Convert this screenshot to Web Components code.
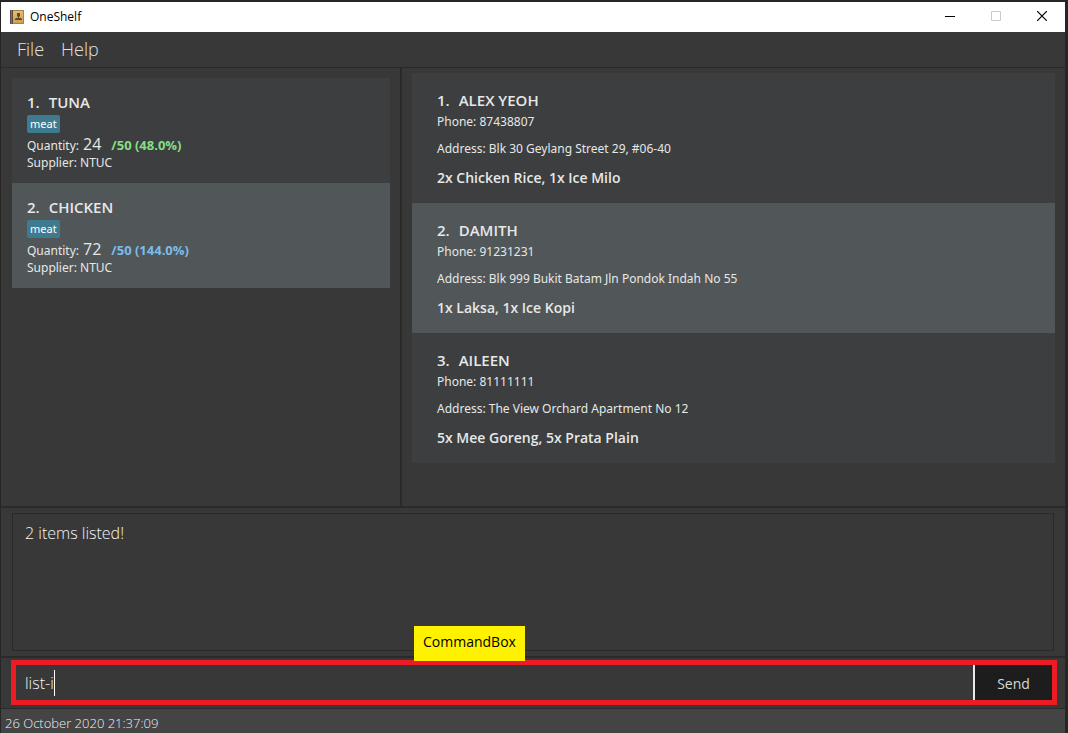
<!DOCTYPE html>
<html lang="en">
<head>
<meta charset="utf-8">
<title>OneShelf</title>
<style>
  body { margin: 0; background: #262626; font-family: "Open Sans", "Noto Sans", sans-serif; }
</style>
</head>
<body>
<shelf-app></shelf-app>

<template id="shelf-app">
  <style>
    :host { display: flex; flex-direction: column; box-sizing: border-box; min-height: 100vh; padding: 2px 3px 0 1px; }
    main { flex: 1; display: grid; grid-template-columns: 399fr 2px 663fr; background: #383838; border-top: 1px solid #2a2a2a; }
    .rule { background: #2a2a2a; }
    .items { padding: 10px 10px 10px 11px; }
    .orders { padding: 5px 10px; }
  </style>
  <title-bar>OneShelf</title-bar>
  <menu-bar></menu-bar>
  <main>
    <section class="items" role="list" aria-label="Items">
      <item-card index="1." name="TUNA" tag="meat" quantity="24" supplier="NTUC">/50 (48.0%)</item-card>
      <item-card index="2." name="CHICKEN" tag="meat" quantity="72" supplier="NTUC" alt over>/50 (144.0%)</item-card>
    </section>
    <div class="rule"></div>
    <section class="orders" role="list" aria-label="Orders">
      <order-card index="1." name="ALEX YEOH" phone="87438807" address="Blk 30 Geylang Street 29, #06-40">2x Chicken Rice, 1x Ice Milo</order-card>
      <order-card index="2." name="DAMITH" phone="91231231" address="Blk 999 Bukit Batam Jln Pondok Indah No 55" alt>1x Laksa, 1x Ice Kopi</order-card>
      <order-card index="3." name="AILEEN" phone="81111111" address="The View Orchard Apartment No 12">5x Mee Goreng, 5x Prata Plain</order-card>
    </section>
  </main>
  <result-display>2 items listed!</result-display>
  <command-box callout="CommandBox" value="list-i"></command-box>
  <status-bar>26 October 2020 21:37:09</status-bar>
</template>

<template id="title-bar">
  <style>
    :host { display: flex; align-items: center; height: 30px; background: #fff; color: #000; font-size: 12px; line-height: 16px; }
    .logo { margin: 0 6px 0 9px; }
    span { flex: 1; }
    button { display: grid; place-items: center; width: 46px; height: 30px; padding: 0 0 2px; border: 0; background: none; }
  </style>
  <svg class="logo" width="14" height="14" viewBox="0 0 14 14" aria-hidden="true">
    <defs><linearGradient id="g" x1="0" y1="0" x2="0" y2="1"><stop offset="0" stop-color="#e9bf70"/><stop offset="1" stop-color="#cf9c4c"/></linearGradient></defs>
    <path fill="url(#g)" d="M2 0h12v14H2z"/>
    <path fill="#5b4a41" d="M0 0h3v14H0z"/>
    <path fill="#85705a" d="M1 0h1v14H1z"/>
    <path fill="#a8824c" d="M3 13h11v1H3zM13 1h1v13h-1zM3 0h11v1H3z"/>
    <path fill="#5d4a2c" d="M7 3h3v3L9 7v1h2l1 1v1H5V9l1-1h2V7L7 6z"/>
  </svg>
  <span><slot></slot></span>
  <button aria-label="Minimize"><svg width="10" height="10"><path fill="#000" d="M0 5h10v1H0z"/></svg></button>
  <button aria-label="Maximize" disabled><svg width="10" height="10"><path fill="none" stroke="#ccc" d="M.5.5h9v9h-9z"/></svg></button>
  <button aria-label="Close"><svg width="10" height="10"><path fill="none" stroke="#000" stroke-width="1.2" d="M0 0l10 10M10 0L0 10"/></svg></button>
</template>

<template id="menu-bar">
  <style>
    :host { display: flex; height: 35px; padding: 0 7px; background: #383838; }
    button { padding: 0 8px 2px 9px; border: 0; background: none; color: #e0e0e0; font: 300 18px/32px "Open Sans", sans-serif; }
  </style>
  <button>File</button><button>Help</button>
</template>

<template id="item-card">
  <style>
    :host { display: block; padding: 14px 15px 11px; background: #3c3e3f; color: #e6e8e8; font-family: "Noto Sans", sans-serif; font-size: 12px; line-height: 18px; }
    :host([alt]) { background: #515658; }
    h2 { display: flex; gap: 9px; margin: 0; font-family: "Open Sans", sans-serif; font-size: 15px; line-height: 20px; font-weight: 600; }
    .tag { width: max-content; margin: 3px 0 2px; padding: 0 3px; border-radius: 2px; background: #3e7b91; color: #fff; font-size: 11px; line-height: 18px; }
    .qty { display: flex; align-items: baseline; gap: 4px; height: 19px; }
    .qty b { font-family: "Open Sans", sans-serif; font-size: 16px; font-weight: 400; }
    .rate { margin-left: 6px; color: #85df85; font-family: "Open Sans", sans-serif; font-size: 13px; font-weight: 700; }
    :host([over]) .rate { color: #7cbce8; }
  </style>
  <h2><span data-of="index"></span><span data-of="name"></span></h2>
  <div class="tag" data-of="tag"></div>
  <div class="qty"><span>Quantity:</span><b data-of="quantity"></b><span class="rate"><slot></slot></span></div>
  <div>Supplier: <span data-of="supplier"></span></div>
</template>

<template id="order-card">
  <style>
    :host { display: block; padding: 17px 25px 14px; background: #3c3e3f; color: #e6e8e8; font-family: "Noto Sans", sans-serif; font-size: 12px; line-height: 18px; }
    :host([alt]) { background: #515658; }
    h2 { display: flex; gap: 9px; margin: 0 0 3px; font-family: "Open Sans", sans-serif; font-size: 15px; line-height: 20px; font-weight: 600; }
    p { margin: 0 0 9px; }
    .dishes { margin: 0; font-family: "Open Sans", sans-serif; font-size: 14px; line-height: 22px; font-weight: 600; }
  </style>
  <h2><span data-of="index"></span><span data-of="name"></span></h2>
  <p>Phone: <span data-of="phone"></span></p>
  <p>Address: <span data-of="address"></span></p>
  <p class="dishes"><slot></slot></p>
</template>

<template id="result-display">
  <style>
    :host { display: block; padding: 5px 11px; background: #383838; border: solid #2a2a2a; border-width: 2px 0; }
    output { display: block; box-sizing: border-box; min-height: 138px; padding: 8px 12px; border: 1px solid #2a2a2a; color: #f5f5f5; font-size: 16px; font-weight: 300; line-height: 22px; }
  </style>
  <output><slot></slot></output>
</template>

<template id="command-box">
  <style>
    :host { display: block; position: relative; padding: 2px 8px 3px 10px; background: #383838; border-bottom: 1px solid #2a2a2a; }
    form { display: flex; height: 35px; border: 5px solid #ed1c24; }
    .field { flex: 1; display: flex; align-items: center; padding-left: 9px; }
    input { field-sizing: content; min-width: 0; padding: 0; border: 0; outline: 0; background: none; color: #f5f5f5; font: 300 16px/24px "Open Sans", sans-serif; }
    .caret { width: 1px; height: 26px; background: #fff; }
    button { width: 79px; padding: 2px 0 0; border: 0; border-left: 2px solid #e8e8e8; background: #1d1d1d; color: #d8d8d8; font: 400 14px/24px "Open Sans", sans-serif; }
    .callout { position: absolute; left: 413px; bottom: 47px; padding: 0 9px 3px; background: #fff200; color: #000; font-size: 14px; line-height: 32px; }
  </style>
  <form>
    <label class="field"><input aria-label="Command"><span class="caret"></span></label>
    <button type="button">Send</button>
  </form>
  <div class="callout" data-of="callout"></div>
</template>

<template id="status-bar">
  <style>
    :host { display: block; height: 24px; padding: 0 4px; background: #444; color: #f0f0f0; font-size: 13px; font-weight: 300; line-height: 28px; overflow: hidden; }
  </style>
  <slot></slot>
</template>

<script>
  class Part extends HTMLElement {
    constructor() {
      super();
      const source = document.getElementById(this.localName);
      this.attachShadow({ mode: "open" }).append(source.content.cloneNode(true));
    }
    connectedCallback() {
      for (const node of this.shadowRoot.querySelectorAll("[data-of]"))
        node.textContent = this.getAttribute(node.dataset.of);
      if (this.localName.endsWith("-card")) this.setAttribute("role", "listitem");
    }
  }
  class CommandBox extends Part {
    connectedCallback() {
      super.connectedCallback();
      this.shadowRoot.querySelector("input").value = this.getAttribute("value");
    }
  }
  customElements.define("title-bar", class extends Part {});
  customElements.define("menu-bar", class extends Part {});
  customElements.define("item-card", class extends Part {});
  customElements.define("order-card", class extends Part {});
  customElements.define("result-display", class extends Part {});
  customElements.define("command-box", CommandBox);
  customElements.define("status-bar", class extends Part {});
  customElements.define("shelf-app", class extends Part {});
</script>
</body>
</html>
